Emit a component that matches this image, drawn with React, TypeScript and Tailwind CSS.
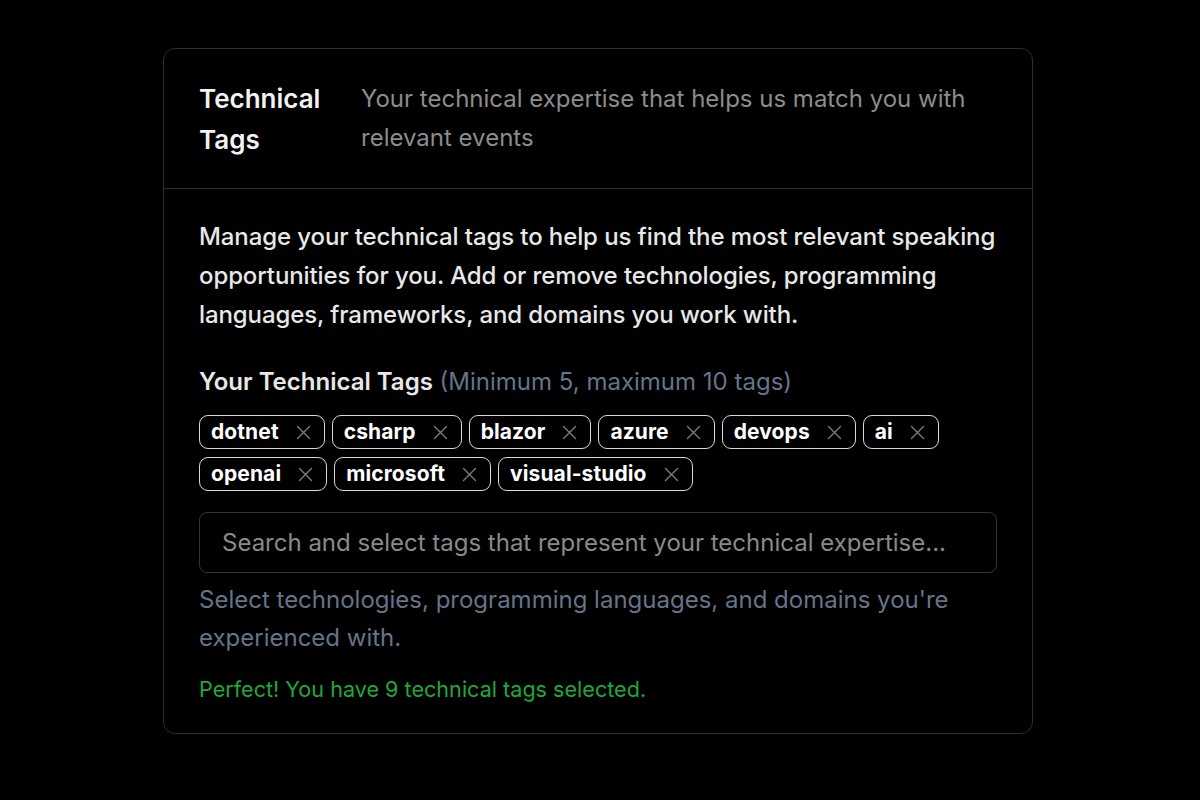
const tags = ["dotnet", "csharp", "blazor", "azure", "devops", "ai", "openai", "microsoft", "visual-studio"];

function CloseIcon() {
  return (
    <svg width="15" height="15" viewBox="0 0 15 15" fill="none" className="shrink-0">
      <path d="M1.5 1.5l12 12M13.5 1.5l-12 12" stroke="#7c7c7c" strokeWidth="1.4" strokeLinecap="round" />
    </svg>
  );
}

export default function App() {
  return (
    <div
      className="min-h-screen w-full bg-black pt-12"
      style={{ fontFamily: "Inter, 'Noto Sans', sans-serif" }}
    >
      <div className="ml-[163px] w-[870px] rounded-xl border border-[#2e2e2e] bg-black">
        {/* header */}
        <div className="flex gap-8 border-b border-[#2e2e2e] px-[35px] pb-[28px] pt-[29px]">
          <h2 className="w-[130px] shrink-0 text-[26px] font-semibold leading-[41px] text-[#f2f2f2]">
            Technical Tags
          </h2>
          <p className="pt-[1px] text-[24px] leading-[39px] text-[#8c8c8c]">
            Your technical expertise that helps us match you with relevant events
          </p>
        </div>

        {/* body */}
        <div className="px-[35px] pb-[30px] pt-[28px]">
          <p className="mr-[-6px] text-[24px] font-medium leading-[39px] tracking-[-0.1px] text-[#e8e8e8]">
            Manage your technical tags to help us find the most relevant speaking opportunities for you. Add or remove
            technologies, programming languages, frameworks, and domains you work with.
          </p>

          <div className="mt-[30px] text-[24px] leading-[36px]">
            <span className="font-semibold text-[#e8e8e8]">Your Technical Tags</span>{" "}
            <span className="text-[#64748b]">(Minimum 5, maximum 10 tags)</span>
          </div>

          <div className="mt-[15px] flex flex-wrap gap-x-[7px] gap-y-[8px]">
            {tags.map((t) => (
              <span
                key={t}
                className="flex h-[34px] items-center gap-[17px] rounded-[9px] border-[1.5px] border-[#d9d9d9] pl-[11px] pr-[13px] text-[21px] font-bold tracking-[0.1px] text-white"
              >
                {t}
                <CloseIcon />
              </span>
            ))}
          </div>

          <div className="mt-[21px] flex h-[61px] items-center rounded-lg border border-[#333] px-[22px] text-[24px] text-[#8a8a8a]">
            Search and select tags that represent your technical expertise...
          </div>

          <p className="mt-[8px] text-[24px] leading-[38px] text-[#64748b]">
            Select technologies, programming languages, and domains you're experienced with.
          </p>

          <p className="mt-[18px] text-[21.6px] leading-[28px] text-[#1fa83c]">
            Perfect! You have 9 technical tags selected.
          </p>
        </div>
      </div>
    </div>
  );
}
